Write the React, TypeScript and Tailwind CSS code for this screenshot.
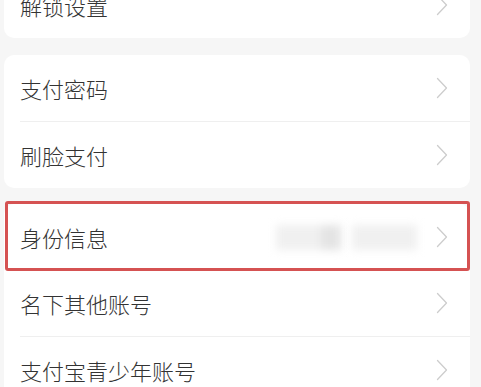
import type { ReactNode } from 'react';

function Chevron() {
  return (
    <svg width="12" height="22" viewBox="0 0 12 22" fill="none" className="shrink-0">
      <polyline points="1.5,1.5 10.5,11 1.5,20.5" stroke="#cdcdcd" strokeWidth="1.3" strokeLinecap="round" strokeLinejoin="round" />
    </svg>
  );
}

function Row({ label, extra, divider }: { label: string; extra?: ReactNode; divider?: boolean }) {
  return (
    <div className="relative">
      {divider && <div className="ml-4 h-px bg-[#efefef]" />}
      <div className="flex h-[66px] items-center pl-4 pr-[22px]">
        <span className="flex-1 text-[22px] font-light leading-none text-[#333333]">{label}</span>
        {extra}
        <Chevron />
      </div>
    </div>
  );
}

function Blurred() {
  return (
    <div className="mr-[19px] flex items-center gap-[11px]">
      <div className="flex h-[25px] w-[65px] blur-[4px]">
        <div className="flex-1 bg-[#f0f0f0]" />
        <div className="w-[20px] bg-[#e4e4e4]" />
      </div>
      <div className="h-[25px] w-[65px] bg-[#f0f0f0] blur-[4px]" />
    </div>
  );
}

export default function App() {
  return (
    <div
      className="h-[387px] overflow-hidden bg-[#f6f6f6] pl-1 pr-[11px]"
      style={{ fontFamily: '"Noto Sans CJK SC", "Noto Sans", sans-serif' }}
    >
      <div className="-mt-[28px] flex flex-col gap-[16px]">
        <div className="overflow-hidden rounded-[10px] bg-white">
          <Row label="解锁设置" />
        </div>
        <div className="mt-px overflow-hidden rounded-[10px] bg-white">
          <Row label="支付密码" />
          <Row label="刷脸支付" divider />
        </div>
        <div className="rounded-[10px] bg-white">
          <div className="relative">
            <Row label="身份信息" extra={<Blurred />} />
            <div className="pointer-events-none absolute -top-[3px] bottom-[-1px] left-px right-0 rounded-[3px] border-[3px] border-[#d55252]" />
          </div>
          <Row label="名下其他账号" />
          <Row label="支付宝青少年账号" divider />
        </div>
      </div>
    </div>
  );
}
